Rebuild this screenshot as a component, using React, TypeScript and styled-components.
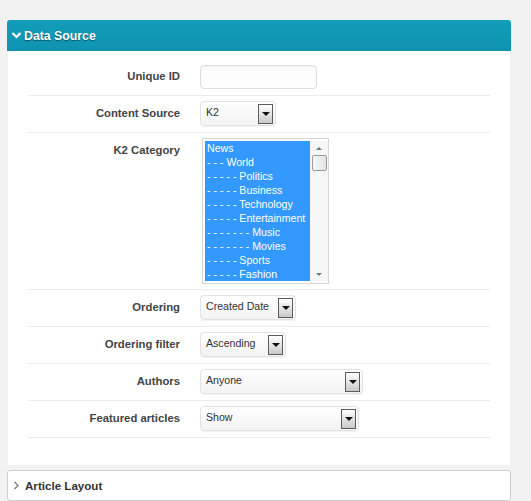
import { FC } from 'react';
import styled, { createGlobalStyle } from 'styled-components';

const GlobalStyle = createGlobalStyle`
  html, body {
    margin: 0;
    padding: 0;
    background: #f2f2f2;
    font-family: 'Liberation Sans', Arial, sans-serif;
  }
`;

const Page = styled.div`
  padding: 20px 20px 0 7px;
  width: 504px;
`;

const PanelHeader = styled.div`
  height: 31px;
  display: flex;
  align-items: center;
  gap: 2px;
  padding-left: 4px;
  background: linear-gradient(#139db9, #0e93b1);
  border-radius: 3px 3px 0 0;
  color: #fff;
  font-size: 12.3px;
  font-weight: bold;
  text-shadow: 0 1px 1px rgba(0, 0, 0, 0.45);
`;

const PanelBody = styled.div`
  margin: 0 1px;
  background: #fff;
  padding: 8px 20px 27px;
`;

const Row = styled.div<{ $top?: boolean }>`
  display: flex;
  align-items: ${(p) => (p.$top ? 'flex-start' : 'center')};
  gap: 20px;
  padding: ${(p) => (p.$top ? '5px 0 5px' : '5px 0 6px')};
  border-bottom: 1px solid #ebebeb;
  min-height: 25px;
`;

const Label = styled.div`
  width: 152px;
  flex: none;
  text-align: right;
  font-size: 11.3px;
  font-weight: bold;
  color: #444;
  line-height: 25px;
`;

const TextInput = styled.div`
  width: 115px;
  height: 22px;
  border: 1px solid #dedede;
  border-radius: 4px;
  background: linear-gradient(#fafafa, #fff);
  box-shadow: inset 0 1px 2px rgba(0, 0, 0, 0.04);
`;

const SelectBox = styled.div<{ $w: number }>`
  width: ${(p) => p.$w}px;
  height: 25px;
  box-sizing: border-box;
  display: flex;
  align-items: center;
  justify-content: space-between;
  padding: 0 2px 0 5px;
  border: 1px solid #e2e2e2;
  border-radius: 4px;
  background: linear-gradient(#ffffff, #f3f3f3);
  box-shadow: 0 1px 1px rgba(0, 0, 0, 0.05);
`;

const SelectText = styled.span`
  font-size: 10.6px;
  color: #333;
  padding-bottom: 4px;
`;

const ArrowButton = styled.div`
  width: 13px;
  height: 18px;
  border: 1px solid #5c5c5c;
  background: linear-gradient(#ffffff, #c9c9c9);
  display: flex;
  align-items: center;
  justify-content: center;
  &::after {
    content: '';
    border-left: 4px solid transparent;
    border-right: 4px solid transparent;
    border-top: 4px solid #111;
    margin-top: 1px;
  }
`;

const ListBox = styled.div`
  margin-left: 2px;
  display: flex;
  border: 1px solid #d6d6d6;
  padding: 2px 0 2px 2px;
  background: #fff;
`;

const Options = styled.div`
  width: 105px;
  background: #3399ff;
`;

const Option = styled.div`
  height: 14px;
  line-height: 14px;
  font-size: 10.6px;
  color: #fff;
  padding-left: 2px;
  white-space: nowrap;
  overflow: hidden;
`;

const Scrollbar = styled.div`
  width: 18px;
  display: flex;
  flex-direction: column;
  align-items: center;
  background: #f6f6f6;
`;

const ScrollArrow = styled.div<{ $down?: boolean }>`
  height: 14px;
  display: flex;
  align-items: center;
  justify-content: center;
  &::after {
    content: '';
    border-left: 3px solid transparent;
    border-right: 3px solid transparent;
    ${(p) => (p.$down ? 'border-top: 3px solid #777;' : 'border-bottom: 3px solid #777;')}
  }
`;

const Thumb = styled.div`
  width: 13px;
  height: 14px;
  border: 1px solid #9a9a9a;
  border-radius: 2px;
  background: linear-gradient(90deg, #f8f8f8, #e2e2e2);
`;

const Spacer = styled.div`
  flex: 1;
`;

const CollapsedPanel = styled.div`
  margin-top: 5px;
  height: 31px;
  box-sizing: border-box;
  border: 1px solid #cfcfcf;
  border-radius: 3px;
  background: #fff;
  display: flex;
  align-items: center;
  gap: 5px;
  padding-left: 5px;
  font-size: 11.6px;
  font-weight: bold;
  color: #333;
`;

const categories = [
  'News',
  '- - - World',
  '- - - - - Politics',
  '- - - - - Business',
  '- - - - - Technology',
  '- - - - - Entertainment',
  '- - - - - - - Music',
  '- - - - - - - Movies',
  '- - - - - Sports',
  '- - - - - Fashion',
];

const Select: FC<{ width: number; value: string }> = ({ width, value }) => (
  <SelectBox $w={width}>
    <SelectText>{value}</SelectText>
    <ArrowButton />
  </SelectBox>
);

const App: FC = () => (
  <>
    <GlobalStyle />
    <Page>
      <PanelHeader>
        <svg width="11" height="11" viewBox="0 0 11 11">
          <path d="M1.5 3 L5.5 7 L9.5 3" fill="none" stroke="#fff" strokeWidth="2.2" />
        </svg>
        Data Source
      </PanelHeader>
      <PanelBody>
        <Row>
          <Label>Unique ID</Label>
          <TextInput />
        </Row>
        <Row>
          <Label>Content Source</Label>
          <Select width={76} value="K2" />
        </Row>
        <Row $top>
          <Label>K2 Category</Label>
          <ListBox>
            <Options>
              {categories.map((c) => (
                <Option key={c}>{c}</Option>
              ))}
            </Options>
            <Scrollbar>
              <ScrollArrow />
              <Thumb />
              <Spacer />
              <ScrollArrow $down />
            </Scrollbar>
          </ListBox>
        </Row>
        <Row>
          <Label>Ordering</Label>
          <Select width={96} value="Created Date" />
        </Row>
        <Row>
          <Label>Ordering filter</Label>
          <Select width={86} value="Ascending" />
        </Row>
        <Row>
          <Label>Authors</Label>
          <Select width={163} value="Anyone" />
        </Row>
        <Row>
          <Label>Featured articles</Label>
          <Select width={159} value="Show" />
        </Row>
      </PanelBody>
      <CollapsedPanel>
        <svg width="7" height="9" viewBox="0 0 7 9">
          <path d="M1.5 1 L5 4.5 L1.5 8" fill="none" stroke="#888" strokeWidth="1.6" />
        </svg>
        Article Layout
      </CollapsedPanel>
    </Page>
  </>
);

export default App;
